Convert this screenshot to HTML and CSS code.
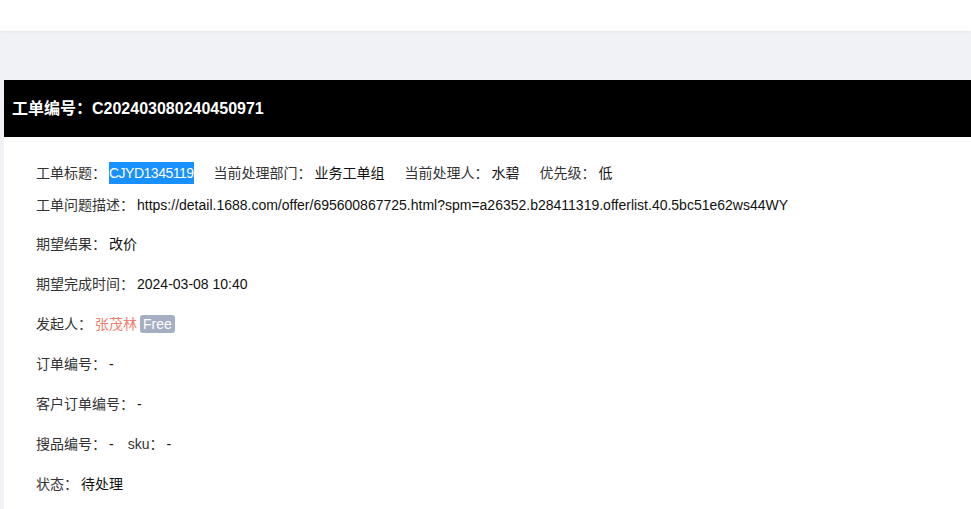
FILE: index.html
```html
<!DOCTYPE html>
<html lang="zh-CN">
<head>
<meta charset="utf-8">
<title>工单详情</title>
<link rel="stylesheet" href="styles.css">
</head>
<body>
<div class="topbar"></div>
<div class="main">
  <div class="card">
    <div class="card-head">工单编号：C202403080240450971</div>
    <div class="card-body">
      <div class="row row-first">
        <span class="label">工单标题：</span><span class="value hl">CJYD1345119</span>
        <span class="label sep">当前处理部门：</span><span class="value">业务工单组</span>
        <span class="label sep">当前处理人：</span><span class="value">水碧</span>
        <span class="label sep">优先级：</span><span class="value">低</span>
      </div>
      <div class="row row-desc">
        <span class="label">工单问题描述：</span><span class="value">https://detail.1688.com/offer/695600867725.html?spm=a26352.b28411319.offerlist.40.5bc51e62ws44WY</span>
      </div>
      <div class="row"><span class="label">期望结果：</span><span class="value">改价</span></div>
      <div class="row"><span class="label">期望完成时间：</span><span class="value">2024-03-08 10:40</span></div>
      <div class="row"><span class="label">发起人：</span><span class="value person">张茂林</span><span class="badge">Free</span></div>
      <div class="row"><span class="label">订单编号：</span><span class="value">-</span></div>
      <div class="row"><span class="label">客户订单编号：</span><span class="value">-</span></div>
      <div class="row"><span class="label">搜品编号：</span><span class="value">-</span><span class="label sep-s">sku：</span><span class="value">-</span></div>
      <div class="row row-last"><span class="label">状态：</span><span class="value">待处理</span></div>
    </div>
  </div>
</div>
</body>
</html>
```
FILE: styles.css
```css
html, body {
  margin: 0;
  padding: 0;
}
body {
  background: #f0f2f5;
  font-family: "Liberation Sans", "Noto Sans CJK SC", sans-serif;
  font-size: 14px;
  color: #000;
  overflow: hidden;
}
.topbar {
  height: 31px;
  background: #fff;
  box-shadow: 0 1px 3px rgba(0, 0, 0, 0.06);
  position: relative;
}
.main {
  padding: 49px 0 0 4px;
}
.card {
  background: #fff;
  min-height: 429px;
}
.card-head {
  background: #000;
  color: #fff;
  font-weight: 700;
  font-size: 16px;
  height: 57px;
  line-height: 57px;
  padding-left: 8px;
}
.card-body {
  padding: 25px 0 0 32px;
}
.row {
  display: flex;
  align-items: center;
  height: 22px;
  line-height: 22px;
  margin-bottom: 18px;
  white-space: nowrap;
}
.row-first {
  margin-bottom: 10px;
}
.row-desc {
  margin-bottom: 17px;
}
.row-last {
  margin-bottom: 0;
}
.label {
  color: #333;
}
.value {
  margin-left: 3px;
  color: #111;
}
.sep {
  margin-left: 20px;
}
.sep-s {
  margin-left: 14px;
}
.hl {
  background: #1890ff;
  color: #fff;
  letter-spacing: -0.5px;
}
.person {
  color: #f0806e;
}
.badge {
  margin-left: 3px;
  background: #a5aec3;
  color: #fff;
  border-radius: 3px;
  height: 18px;
  line-height: 18px;
  padding: 0 3px;
}
```
